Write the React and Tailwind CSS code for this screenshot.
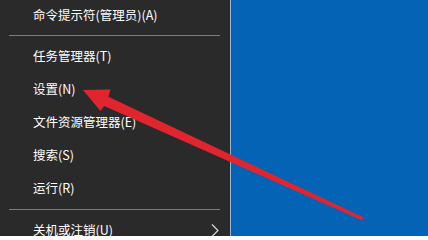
const items = [
  { label: '任务管理器(T)' },
  { label: '设置(N)' },
  { label: '文件资源管理器(E)' },
  { label: '搜索(S)' },
  { label: '运行(R)' },
];

const MenuItem = ({ label, sub, className = 'h-[33px]' }) => (
  <div className={`flex shrink-0 items-center justify-between pl-[33px] pr-[10px] text-[12.5px] text-white ${className}`}>
    <span>{label}</span>
    {sub && (
      <svg width="8" height="13" viewBox="0 0 8 13" className="mr-[1px]">
        <path d="M1 0.5 L7 6.5 L1 12.5" fill="none" stroke="#d8d8d8" strokeWidth="1.2" />
      </svg>
    )}
  </div>
);

const Separator = ({ className }) => (
  <div className={`flex shrink-0 items-center pl-[9px] pr-[10px] ${className}`}>
    <div className="h-px w-full bg-[#7c7c7c]" />
  </div>
);

const Arrow = () => (
  <svg className="absolute left-0 top-0 pointer-events-none" width="428" height="236" viewBox="0 0 428 236">
    <polygon
      points="83,90 110.5,89.5 108.4,96.8 363.6,217.6 362.4,220.4 104.2,105.9 100.5,111"
      fill="#e0252f"
    />
  </svg>
);

export default function App() {
  return (
    <div
      className="relative flex h-[236px] w-[428px] overflow-hidden bg-[#0563b5]"
      style={{ fontFamily: '"Noto Sans CJK SC", "Microsoft YaHei", sans-serif' }}
    >
      <div className="flex h-full w-[230px] flex-col bg-[#2b2a2a]">
        <MenuItem label="命令提示符(管理员)(A)" className="h-[30px]" />
        <Separator className="h-[10px]" />
        {items.map((item) => (
          <MenuItem key={item.label} label={item.label} />
        ))}
        <Separator className="h-[9px]" />
        <MenuItem label="关机或注销(U)" sub />
      </div>
      <div className="h-full w-px bg-[#9ab3cf]" />
      <div className="flex-1" />
      <Arrow />
    </div>
  );
}
